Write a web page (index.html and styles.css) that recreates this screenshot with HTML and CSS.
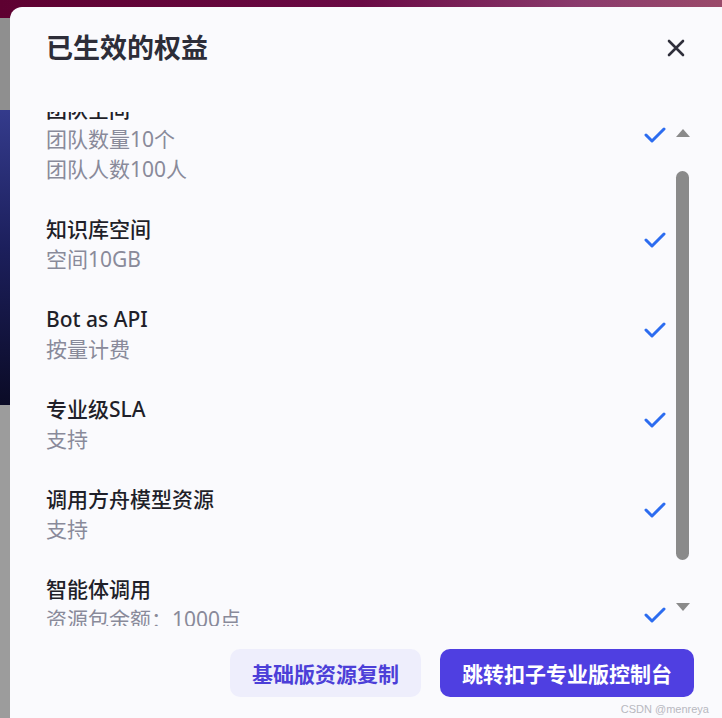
FILE: index.html
```html
<!DOCTYPE html>
<html lang="zh-CN">
<head>
    <meta charset="UTF-8">
    <meta name="viewport" content="width=device-width, initial-scale=1.0">
    <title>已生效的权益</title>
    <link rel="stylesheet" href="styles.css">
</head>
<body>
    <div class="backdrop">
        <div class="modal">
            <div class="modal-header">
                <h2 class="modal-title">已生效的权益</h2>
                <button class="close-btn" aria-label="关闭">
                    <svg width="18" height="18" viewBox="0 0 18 18">
                        <path d="M2 2 L16 16 M16 2 L2 16" stroke="#2f2f3b" stroke-width="2.6" stroke-linecap="round"/>
                    </svg>
                </button>
            </div>

            <div class="benefit-viewport">
                <div class="benefit-list">
                    <div class="benefit">
                        <div class="benefit-text">
                            <div class="benefit-name">团队空间</div>
                            <div class="benefit-desc">团队数量10个</div>
                            <div class="benefit-desc">团队人数100人</div>
                        </div>
                        <svg class="check" width="22" height="16" viewBox="0 0 22 16"><path d="M2 8 L8 14 L20 2"/></svg>
                    </div>
                    <div class="benefit">
                        <div class="benefit-text">
                            <div class="benefit-name">知识库空间</div>
                            <div class="benefit-desc">空间10GB</div>
                        </div>
                        <svg class="check" width="22" height="16" viewBox="0 0 22 16"><path d="M2 8 L8 14 L20 2"/></svg>
                    </div>
                    <div class="benefit">
                        <div class="benefit-text">
                            <div class="benefit-name">Bot as API</div>
                            <div class="benefit-desc">按量计费</div>
                        </div>
                        <svg class="check" width="22" height="16" viewBox="0 0 22 16"><path d="M2 8 L8 14 L20 2"/></svg>
                    </div>
                    <div class="benefit">
                        <div class="benefit-text">
                            <div class="benefit-name">专业级SLA</div>
                            <div class="benefit-desc">支持</div>
                        </div>
                        <svg class="check" width="22" height="16" viewBox="0 0 22 16"><path d="M2 8 L8 14 L20 2"/></svg>
                    </div>
                    <div class="benefit">
                        <div class="benefit-text">
                            <div class="benefit-name">调用方舟模型资源</div>
                            <div class="benefit-desc">支持</div>
                        </div>
                        <svg class="check" width="22" height="16" viewBox="0 0 22 16"><path d="M2 8 L8 14 L20 2"/></svg>
                    </div>
                    <div class="benefit">
                        <div class="benefit-text">
                            <div class="benefit-name">智能体调用</div>
                            <div class="benefit-desc">资源包余额：1000点</div>
                            <div class="benefit-desc">有效期至2025-12-31</div>
                        </div>
                        <svg class="check" width="22" height="16" viewBox="0 0 22 16"><path d="M2 8 L8 14 L20 2"/></svg>
                    </div>
                </div>

                <div class="scrollbar">
                    <div class="arrow arrow-up"></div>
                    <div class="thumb"></div>
                    <div class="arrow arrow-down"></div>
                </div>
            </div>

            <div class="modal-footer">
                <button class="btn btn-light">基础版资源复制</button>
                <button class="btn btn-primary">跳转扣子专业版控制台</button>
            </div>

            <div class="watermark">CSDN @menreya</div>
        </div>
    </div>
</body>
</html>
```

FILE: styles.css
```css
body, html {
    margin: 0;
    padding: 0;
    width: 722px;
    height: 718px;
    overflow: hidden;
    font-family: "Noto Sans", "Noto Sans CJK SC", sans-serif;
}

.backdrop {
    width: 722px;
    height: 718px;
    box-sizing: border-box;
    padding: 7px 0 0 10px;
    background:
        linear-gradient(to right, #5e0131 0%, #6a0a45 50%, #8a3a6c 80%, #9a4a6a 100%) 0 0 / 100% 18px no-repeat,
        linear-gradient(to bottom, #8f8f8f 0, #8f8f8f 92px, #343b8c 92px, #1c1f5c 230px, #0b0b26 387px, #9c9c9c 387px) 0 18px / 10px 700px no-repeat,
        #9c9c9c;
}

.modal {
    position: relative;
    width: 712px;
    height: 711px;
    box-sizing: border-box;
    background-color: #fafafd;
    border-radius: 12px 0 0 0;
    display: flex;
    flex-direction: column;
}

.modal-header {
    display: flex;
    justify-content: space-between;
    align-items: center;
    padding: 25px 37px 0 36px;
}

.modal-title {
    margin: 0;
    font-size: 27px;
    line-height: 32px;
    font-weight: 700;
    color: #2d2d38;
}

.close-btn {
    border: none;
    background: none;
    padding: 0;
    width: 18px;
    height: 18px;
    display: flex;
    cursor: pointer;
}

.benefit-viewport {
    position: relative;
    margin-top: 48px;
    height: 514px;
    overflow: hidden;
}

.benefit-list {
    margin-top: -18px;
    padding: 0 56px 0 36px;
}

.benefit {
    display: flex;
    justify-content: space-between;
    align-items: center;
    padding-bottom: 30px;
}

.benefit-text {
    font-size: 21px;
    line-height: 30px;
}

.benefit-name {
    color: #1f1f29;
    font-weight: 500;
}

.benefit-desc {
    color: #898a9a;
}

.check {
    margin-bottom: 8px;
    fill: none;
    stroke: #2c6cf0;
    stroke-width: 3;
    stroke-linecap: round;
    stroke-linejoin: round;
}

/* fake scrollbar drawn over the list */
.scrollbar {
    position: absolute;
    top: 17px;
    right: 33px;
    width: 13px;
    display: flex;
    flex-direction: column;
    align-items: center;
}

.arrow {
    width: 0;
    height: 0;
    border-left: 7px solid transparent;
    border-right: 7px solid transparent;
}

.arrow-up {
    border-bottom: 8px solid #8a8a8a;
}

.arrow-down {
    margin-top: 43px;
    border-top: 8px solid #8a8a8a;
}

.thumb {
    margin-top: 34px;
    width: 13px;
    height: 389px;
    border-radius: 7px;
    background-color: #8a8a8a;
}

.modal-footer {
    display: flex;
    justify-content: flex-end;
    gap: 19px;
    padding: 23px 28px 0 0;
}

.btn {
    height: 48px;
    border: none;
    border-radius: 10px;
    padding: 0 22px;
    font-family: "Noto Sans CJK SC", sans-serif;
    font-size: 21px;
    font-weight: 700;
    cursor: pointer;
}

.btn-light {
    background-color: #eeeefc;
    color: #4c3fd8;
}

.btn-primary {
    background-color: #4f3fe1;
    color: #fff;
}

.watermark {
    position: absolute;
    right: 13px;
    bottom: 3px;
    font-family: "Liberation Sans", sans-serif;
    font-size: 11px;
    color: #b8b8c0;
}
```
